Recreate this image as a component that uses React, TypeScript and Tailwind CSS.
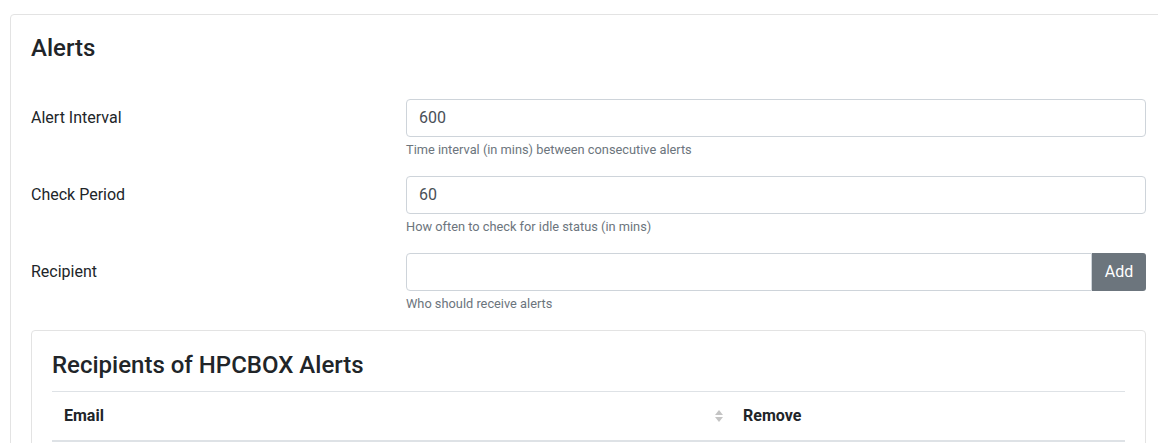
import React from 'react';

const fields = [
  { label: 'Alert Interval', value: '600', help: 'Time interval (in mins) between consecutive alerts' },
  { label: 'Check Period', value: '60', help: 'How often to check for idle status (in mins)' },
];

const SortIcon = () => (
  <svg width="10" height="14" viewBox="0 0 10 14" className="fill-[#c4c4c4]">
    <path d="M5 1 L9 6 L1 6 Z" />
    <path d="M5 13 L9 8 L1 8 Z" />
  </svg>
);

const App = () => {
  return (
    <div className="w-screen h-screen overflow-hidden bg-white font-['Roboto',sans-serif] text-[#212529]">
      <div className="pl-[10px] pt-[14px]">
        <div className="w-[1180px] border border-[#e3e3e3] rounded-[4px] pt-[19px] pl-[20px] pr-[32px] pb-5">
          <div className="w-[1115px]">
            <h2 className="text-[24px] font-medium leading-[1.2] mb-[36px]">Alerts</h2>

            {fields.map((f) => (
              <div key={f.label} className="flex mb-[17px]">
                <label className="w-[375px] shrink-0 text-[16px] leading-[38px]">{f.label}</label>
                <div className="flex-1">
                  <input
                    defaultValue={f.value}
                    className="w-full h-[38px] border border-[#ced4da] rounded-[4px] px-3 text-[16px] text-[#495057] outline-none"
                  />
                  <p className="mt-[4px] text-[12.8px] leading-[18px] text-[#6c757d]">{f.help}</p>
                </div>
              </div>
            ))}

            <div className="flex mb-[17px]">
              <label className="w-[375px] shrink-0 text-[16px] leading-[38px]">Recipient</label>
              <div className="flex-1">
                <div className="flex">
                  <input className="flex-1 h-[38px] border border-[#ced4da] rounded-l-[4px] px-3 text-[16px] outline-none" />
                  <button className="w-[54px] h-[38px] bg-[#6c757d] text-white text-[16px] rounded-r-[3px]">Add</button>
                </div>
                <p className="mt-[4px] text-[12.8px] leading-[18px] text-[#6c757d]">Who should receive alerts</p>
              </div>
            </div>

            <div className="border border-[#e3e3e3] rounded-[4px] px-[20px] pt-[20px] pb-5">
              <h3 className="text-[24px] font-medium leading-[1.2] mb-[11px]">Recipients of HPCBOX Alerts</h3>
              <table className="w-full text-[16px]">
                <thead>
                  <tr className="border-t border-[#dee2e6] border-b-2">
                    <th className="w-[679px] px-3 py-3 text-left font-bold leading-6">
                      <div className="flex items-center justify-between">
                        <span>Email</span>
                        <span className="mr-[-5px]"><SortIcon /></span>
                      </div>
                    </th>
                    <th className="px-3 py-3 text-left font-bold leading-6">Remove</th>
                  </tr>
                </thead>
                <tbody>
                  <tr>
                    <td className="px-3 py-3">&nbsp;</td>
                    <td className="px-3 py-3"></td>
                  </tr>
                </tbody>
              </table>
            </div>
          </div>
        </div>
      </div>
    </div>
  );
};

export default App;
